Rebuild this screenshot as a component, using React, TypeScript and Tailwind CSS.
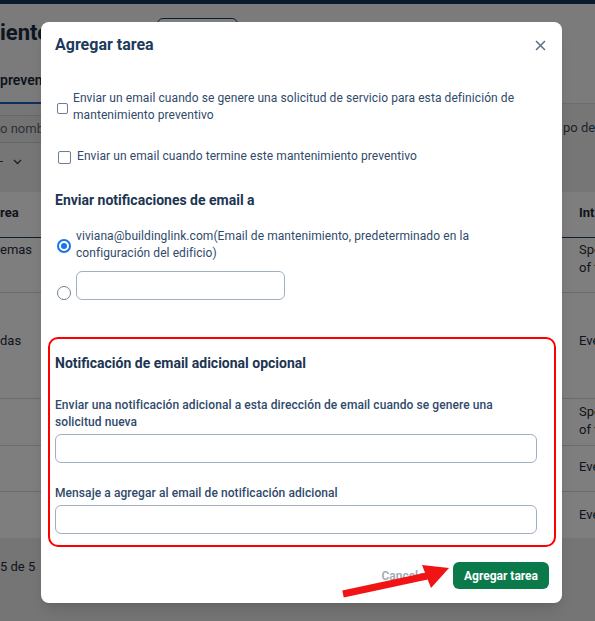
export default function App() {
  return (
    <div className="relative w-[595px] h-[621px] overflow-hidden bg-[#f6f6f6] font-['Roboto',sans-serif]">
      {/* background page */}
      <div className="h-[4px] bg-[#16345a]" />
      <div className="flex items-start h-[34px] mt-[14px]">
        <div className="w-[157px] mt-[1px] text-[22px] leading-[28px] font-bold text-[#1b2b40] whitespace-nowrap">iento</div>
        <div className="w-[81px] h-[34px] rounded-[6px] border border-[#1d3b63] bg-white" />
      </div>
      <div className="mt-[18px] border-b border-[#d4d8de] h-[34px]">
        <div className="w-[70px] h-[34px] border-b-2 border-[#1f5fbf] text-[14px] leading-[20px] font-semibold text-[#1b2b40] whitespace-nowrap">preven</div>
      </div>
      <div className="relative h-[88px] bg-[#ececec] pt-[11px]">
        <div className="w-[300px] h-[28px] border-y border-[#c6ccd4] bg-[#e6e6e6] flex items-center text-[13px] text-[#5b6472] whitespace-nowrap">o nombre</div>
        <div className="absolute left-[563px] top-[15px] w-[32px] overflow-hidden text-[13px] leading-[18px] text-[#3b4656] whitespace-nowrap">po de t</div>
        <div className="flex items-center h-[17px] mt-[10px]">
          <div className="w-[3px] h-[1px] bg-[#3b4656]" />
          <svg width="9" height="6" viewBox="0 0 9 6" className="ml-[10px]">
            <path d="M1 1l3.5 3.5L8 1" stroke="#3b4656" strokeWidth="1.4" fill="none" />
          </svg>
        </div>
      </div>
      <div className="bg-[#fdfdfd] text-[13px] leading-[18px] text-[#1e2a3a]">
        <div className="h-[46px] flex justify-between pt-[12px] border-b border-[#1e3a5f] font-bold">
          <span>rea</span>
          <span className="w-[16px] whitespace-nowrap overflow-hidden">Int</span>
        </div>
        <div className="h-[55px] flex justify-between pt-[3px] border-b border-[#d6d6d6]">
          <span>emas</span>
          <span className="w-[16px] whitespace-nowrap overflow-hidden">Spe<br />of t</span>
        </div>
        <div className="h-[106px] flex justify-between pt-[39px] border-b border-[#d6d6d6]">
          <span>das</span>
          <span className="w-[16px] whitespace-nowrap overflow-hidden">Eve</span>
        </div>
        <div className="h-[47px] flex justify-between pt-[4px] border-b border-[#d6d6d6]">
          <span />
          <span className="w-[16px] whitespace-nowrap overflow-hidden">Spe<br />of t</span>
        </div>
        <div className="h-[46px] flex justify-between pt-[12px] border-b border-[#d6d6d6]">
          <span />
          <span className="w-[16px] whitespace-nowrap overflow-hidden">Eve</span>
        </div>
        <div className="h-[46px] flex justify-between pt-[14px]">
          <span />
          <span className="w-[16px] whitespace-nowrap overflow-hidden">Eve</span>
        </div>
      </div>
      <div className="h-[100px] bg-[#ebebeb] pt-[20px] text-[13px] leading-[18px] text-[#1e2a3a]">5 de 5</div>

      {/* overlay */}
      <div className="absolute inset-0 bg-black/50" />

      {/* modal */}
      <div className="absolute left-[41px] top-[22px] w-[521px] h-[581px] bg-white rounded-[8px] shadow-lg flex flex-col">
        <div className="h-[46px] flex items-center justify-between pl-[14px] pr-[16px]">
          <div className="text-[16px] font-bold text-[#1d3a5c]">Agregar tarea</div>
          <svg width="11" height="11" viewBox="0 0 11 11">
            <path d="M1 1l9 9M10 1l-9 9" stroke="#5b6f87" strokeWidth="1.5" />
          </svg>
        </div>
        <div className="pl-[14px] pr-[25px] text-[12px] leading-[17px] tracking-[0.08px] text-[#2f4a6b]">
          <div className="mt-[22px] flex items-center">
            <div className="ml-[2px] mt-[3px] w-[11px] h-[11px] shrink-0 border-[1.5px] border-[#6b7d92] rounded-[2px]" />
            <div className="ml-[5px]">Enviar un email cuando se genere una solicitud de servicio para esta definición de mantenimiento preventivo</div>
          </div>
          <div className="mt-[24px] flex items-center">
            <div className="ml-[3px] mt-[2px] w-[13px] h-[13px] shrink-0 border-[1.5px] border-[#6b7d92] rounded-[2px]" />
            <div className="ml-[6px]">Enviar un email cuando termine este mantenimiento preventivo</div>
          </div>
          <div className="mt-[25px] text-[14px] leading-[20px] tracking-normal font-bold text-[#1c3552]">Enviar notificaciones de email a</div>
          <div className="mt-[18px] flex items-center">
            <div className="ml-[2px] mt-[1px] w-[14px] h-[14px] shrink-0 rounded-full border-2 border-[#1a73e8] flex items-center justify-center">
              <div className="w-[6px] h-[6px] rounded-full bg-[#1a73e8]" />
            </div>
            <div className="ml-[5px]">viviana@buildinglink.com(Email de mantenimiento, predeterminado en la configuración del edificio)</div>
          </div>
          <div className="mt-[9px] flex items-end">
            <div className="ml-[2px] w-[14px] h-[14px] shrink-0 rounded-full border-[1.5px] border-[#6f7f91]" />
            <div className="ml-[5px] w-[209px] h-[29px] rounded-[6px] border border-[#9fb0c3]" />
          </div>
          <div className="mt-[37px] ml-[-7px] mr-[-19px] border-2 border-[#ff0000] rounded-[10px] pl-[5px] pr-[17px] pt-[14px] pb-[11px]">
            <div className="text-[14px] leading-[20px] tracking-normal font-bold text-[#1c3552]">Notificación de email adicional opcional</div>
            <div className="mt-[24px] max-w-[460px] font-medium">Enviar una notificación adicional a esta dirección de email cuando se genere una solicitud nueva</div>
            <div className="mt-[3px] h-[29px] rounded-[6px] border border-[#9fb0c3]" />
            <div className="mt-[22px] font-medium">Mensaje a agregar al email de notificación adicional</div>
            <div className="mt-[3px] h-[29px] rounded-[6px] border border-[#9fb0c3]" />
          </div>
        </div>
        <div className="mt-[15px] flex items-center justify-end pr-[13px]">
          <div className="mr-[24px] text-[12px] font-semibold text-[#a0aab5]">Cancelar</div>
          <div className="h-[27px] px-[11px] rounded-[6px] bg-[#0b7a4b] flex items-center text-[12px] font-bold text-white">Agregar tarea</div>
        </div>
      </div>

      {/* annotation arrow */}
      <svg className="absolute left-0 top-0 pointer-events-none" width="595" height="621" viewBox="0 0 595 621">
        <line x1="343" y1="594" x2="427" y2="576" stroke="#f01414" strokeWidth="7" />
        <polygon points="422,565 431,588 449,568" fill="#f01414" />
      </svg>
    </div>
  );
}
